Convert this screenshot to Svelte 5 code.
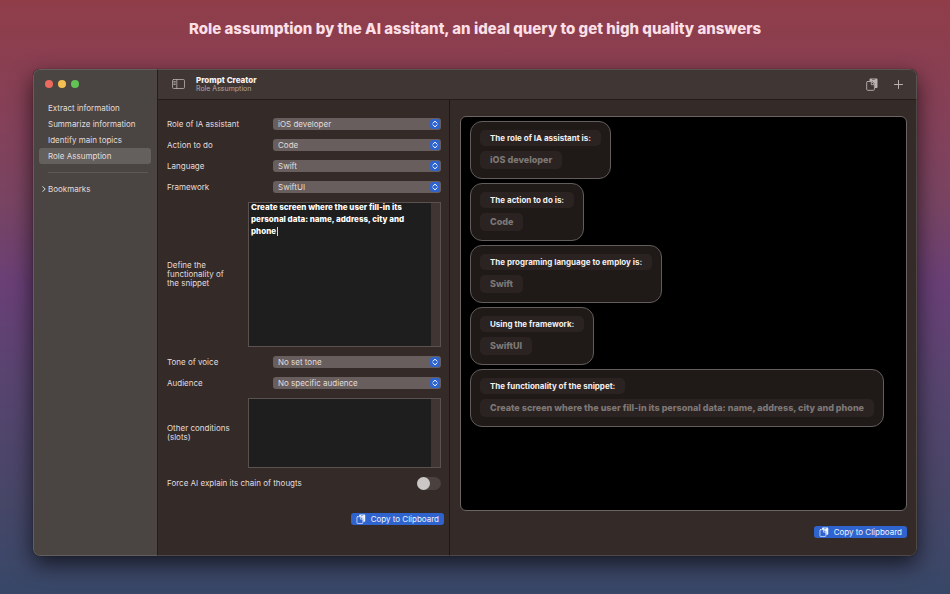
<script>
  const sections = [
    'Extract information',
    'Summarize information',
    'Identify main topics',
    'Role Assumption'
  ];

  let selected = $state('Role Assumption');
  let bookmarksOpen = $state(false);

  const roles = ['iOS developer', 'Web developer', 'Data scientist'];
  const actions = ['Code', 'Explain', 'Refactor'];
  const languages = ['Swift', 'Kotlin', 'JavaScript'];
  const frameworks = ['SwiftUI', 'UIKit', 'AppKit'];
  const tones = ['No set tone', 'Formal', 'Friendly'];
  const audiences = ['No specific audience', 'Beginners', 'Experts'];

  let form = $state({
    role: roles[0],
    action: actions[0],
    language: languages[0],
    framework: frameworks[0],
    tone: tones[0],
    audience: audiences[0],
    snippet: 'Create screen where the user fill-in its personal data: name, address, city and phone',
    conditions: '',
    chain: false
  });

  let cards = $derived([
    { title: 'The role of IA assistant is:', value: form.role },
    { title: 'The action to do is:', value: form.action },
    { title: 'The programing language to employ is:', value: form.language },
    { title: 'Using the framework:', value: form.framework },
    { title: 'The functionality of the snippet:', value: form.snippet }
  ]);

  function copyPrompt() {
    const text = cards.map((c) => `${c.title} ${c.value}`).join('\n');
    navigator.clipboard?.writeText(text);
  }
</script>

{#snippet clipboardIcon()}
  <svg class="clip" viewBox="0 0 12 13" aria-hidden="true">
    <path
      fill="currentColor"
      fill-rule="evenodd"
      d="M4.500.5h6c.6 0 1 .4 1 1v7.600c0 .6-.4 1-1 1H9V6.300L6.200 3.200H3.500V1.500c0-.6.4-1 1-1zM6 1.400v.7h3v-.7z"
    />
    <path
      fill="none"
      stroke="currentColor"
      stroke-width="0.9"
      d="M1.500 3.500h4.200l2.700 2.900v5.100c0 .5-.3.800-.8.800H1.500c-.5 0-.8-.3-.8-.8V4.300c0-.5.3-.8.8-.8zM5.300 3.700v3h3"
    />
  </svg>
{/snippet}

{#snippet picker(id, label, options)}
  <div class="row">
    <label for={id}>{label}</label>
    <div class="popup">
      <select {id} bind:value={form[id]}>
        {#each options as option}
          <option>{option}</option>
        {/each}
      </select>
      <svg class="stepper" viewBox="0 0 10 10" aria-hidden="true">
        <path d="M3 4.100 5 2.100l2 2M3 5.900l2 2 2-2" />
      </svg>
    </div>
  </div>
{/snippet}

<div class="desktop">
  <h1>Role assumption by the AI assitant, an ideal query to get high quality answers</h1>

  <div class="window">
    <aside>
      <div class="lights">
        <button class="red" aria-label="Close"></button>
        <button class="yellow" aria-label="Minimize"></button>
        <button class="green" aria-label="Zoom"></button>
      </div>
      <nav>
        {#each sections as section}
          <button class="item" class:active={selected === section} onclick={() => (selected = section)}>
            {section}
          </button>
        {/each}
      </nav>
      <hr />
      <button class="bookmarks" aria-expanded={bookmarksOpen} onclick={() => (bookmarksOpen = !bookmarksOpen)}>
        <svg viewBox="0 0 4 6" aria-hidden="true"><path d="M.8.600 3.200 3 .8 5.400" /></svg>
        Bookmarks
      </button>
    </aside>

    <main>
      <header>
        <button class="tool" aria-label="Toggle sidebar">
          <svg class="panel" viewBox="0 0 13 10" aria-hidden="true">
            <rect x="0.500" y="0.500" width="12" height="9" rx="1.200" />
            <path d="M4.800.500v9M1.800 2.500h1.500M1.800 4h1.500M1.800 5.500h1.500" />
          </svg>
        </button>
        <div class="titles">
          <h2>Prompt Creator</h2>
          <p>{selected}</p>
        </div>
        <button class="tool" aria-label="Copy" onclick={copyPrompt}>{@render clipboardIcon()}</button>
        <button class="tool" aria-label="Add">
          <svg class="plus" viewBox="0 0 9 9" aria-hidden="true"><path d="M4.500.5v8M.5 4.500h8" /></svg>
        </button>
      </header>

      <div class="panes">
        <section class="form">
          {@render picker('role', 'Role of IA assistant', roles)}
          {@render picker('action', 'Action to do', actions)}
          {@render picker('language', 'Language', languages)}
          {@render picker('framework', 'Framework', frameworks)}

          <div class="row wide">
            <label for="snippet">Define the functionality of the snippet</label>
            <div class="editor tall">
              <textarea id="snippet" bind:value={form.snippet}></textarea>
              <span class="caret"></span>
            </div>
          </div>

          {@render picker('tone', 'Tone of voice', tones)}
          {@render picker('audience', 'Audience', audiences)}

          <div class="row wide">
            <label for="conditions">Other conditions (slots)</label>
            <div class="editor">
              <textarea id="conditions" bind:value={form.conditions}></textarea>
            </div>
          </div>

          <div class="toggle">
            <label for="chain">Force AI explain its chain of thougts</label>
            <input id="chain" type="checkbox" role="switch" bind:checked={form.chain} />
          </div>

          <button class="copy" onclick={copyPrompt}>{@render clipboardIcon()}Copy to Clipboard</button>
        </section>

        <section class="preview">
          <div class="output">
            {#each cards as card}
              <article>
                <h3>{card.title}</h3>
                <p>{card.value}</p>
              </article>
            {/each}
          </div>
          <button class="copy" onclick={copyPrompt}>{@render clipboardIcon()}Copy to Clipboard</button>
        </section>
      </div>
    </main>
  </div>
</div>

<style>
  :global(body) {
    margin: 0;
  }

  .desktop {
    box-sizing: border-box;
    min-height: 100vh;
    padding: 18px 33px 38px;
    display: flex;
    flex-direction: column;
    gap: 29px;
    background: linear-gradient(#903d49 0%, #83415a 22%, #784462 34%, #693f76 48%, #58446f 64%, #474667 84%, #384767 100%);
    color: #e2dddb;
    font-family: Inter, 'Liberation Sans', sans-serif;
    font-size: 8px;
    line-height: 10px;
  }

  h1,
  h2,
  h3,
  p {
    margin: 0;
  }

  h1 {
    color: #fbdfe6;
    font-size: 15px;
    font-weight: 800;
    line-height: 22px;
    text-align: center;
  }

  button,
  select,
  textarea {
    font: inherit;
    color: inherit;
  }

  button {
    padding: 0;
    border: 0;
    background: none;
  }

  svg {
    display: block;
    flex: none;
  }

  svg path,
  svg rect {
    stroke-linecap: round;
    stroke-linejoin: round;
  }

  .bookmarks path,
  .plus path,
  .panel path,
  .panel rect {
    fill: none;
    stroke: currentColor;
  }

  .window {
    flex: 1;
    display: flex;
    border-radius: 7px;
    overflow: hidden;
    background: #342a28;
    box-shadow:
      0 0 1px #00000099,
      0 8px 22px #000000a8;
    position: relative;
  }

  .window::after {
    content: '';
    position: absolute;
    inset: 0;
    border: 1px solid #ffffff24;
    border-radius: 7px;
    pointer-events: none;
  }

  /* sidebar */
  aside {
    box-sizing: border-box;
    flex: 0 0 125px;
    padding: 11px 6px;
    background: #4a4542;
    border-right: 1px solid #231d1b;
  }

  .lights {
    display: flex;
    gap: 5px;
    padding: 0 6px;
  }

  .lights button {
    width: 8px;
    height: 8px;
    border-radius: 50%;
  }

  .red {
    background: #ec6a5e;
  }

  .yellow {
    background: #f4bf50;
  }

  .green {
    background: #61c455;
  }

  nav {
    margin-top: 12px;
    display: flex;
    flex-direction: column;
  }

  .item {
    height: 16px;
    padding: 0 9px;
    border-radius: 3px;
    text-align: left;
  }

  .item.active {
    background: #64605d;
  }

  hr {
    margin: 8px 3px 11px 9px;
    border: 0;
    border-top: 1px solid #5d5855;
  }

  .bookmarks {
    display: flex;
    align-items: center;
    gap: 2px;
    padding: 0 3px;
  }

  .bookmarks svg {
    width: 4px;
    height: 6px;
  }

  /* toolbar */
  main {
    flex: 1;
    min-width: 0;
    display: flex;
    flex-direction: column;
  }

  header {
    box-sizing: border-box;
    height: 31px;
    padding: 0 14px;
    display: flex;
    align-items: center;
    gap: 11px;
    background: #403735;
    border-bottom: 1px solid #241c1b;
  }

  .tool {
    color: #b9b2b0;
  }

  .panel {
    width: 13px;
    height: 10px;
    stroke-width: 0.8;
  }

  .plus {
    width: 9px;
    height: 9px;
  }

  .clip {
    width: 12px;
    height: 13px;
  }

  header .clip {
    margin-right: 5px;
  }

  .titles {
    flex: 1;
  }

  h2 {
    color: #f5f1f0;
    font-size: 8px;
    font-weight: 800;
    line-height: 10px;
  }

  .titles p {
    color: #b0a8a6;
    font-size: 7px;
    line-height: 8px;
  }

  .panes {
    flex: 1;
    display: grid;
    grid-template-columns: 292fr 467fr;
  }

  /* form */
  .form {
    padding: 18px 8px 0 9px;
    display: flex;
    flex-direction: column;
    gap: 9px;
    border-right: 1px solid #1f1716;
  }

  .row {
    display: grid;
    grid-template-columns: minmax(0, 106fr) minmax(0, 168fr);
    align-items: center;
  }

  .row.wide {
    grid-template-columns: minmax(0, 81fr) minmax(0, 193fr);
  }

  label {
    line-height: 9px;
  }

  .row.wide label {
    padding-right: 12px;
  }

  .popup {
    position: relative;
    height: 12px;
  }

  select {
    display: block;
    width: 100%;
    height: 12px;
    padding: 0 14px 0 5px;
    border: 0;
    border-radius: 3px;
    background: #685e5d;
    line-height: 12px;
    appearance: none;
  }

  .stepper {
    position: absolute;
    top: 1px;
    right: 1px;
    width: 10px;
    height: 10px;
    border-radius: 3px;
    background: #2f64cf;
  }

  .stepper path {
    fill: none;
    stroke: #fff;
  }

  .editor {
    position: relative;
    box-sizing: border-box;
    height: 70px;
    border: 1px solid #5b5250;
    background: #1e1e1e;
    overflow: hidden;
    display: flex;
  }

  .editor.tall {
    height: 145px;
  }

  textarea {
    box-sizing: border-box;
    width: 100%;
    margin-top: -2px;
    padding: 0 2px;
    border: 0;
    border-right: 9px solid #403533;
    background: none;
    color: #fff;
    font-weight: 800;
    line-height: 12px;
    resize: none;
    outline: none;
    overflow: hidden;
  }

  .caret {
    position: absolute;
    top: 24px;
    left: 28px;
    width: 1px;
    height: 9px;
    background: #d8d8d8;
  }

  .toggle {
    display: flex;
    justify-content: space-between;
    align-items: center;
  }

  .toggle input {
    appearance: none;
    margin: 0;
    width: 24px;
    height: 13px;
    border-radius: 7px;
    background: #4b4240;
    display: flex;
  }

  .toggle input::before {
    content: '';
    width: 13px;
    height: 13px;
    border-radius: 50%;
    background: #cbc7c6;
  }

  .toggle input:checked {
    justify-content: flex-end;
    background: #2f64cf;
  }

  .copy {
    align-self: flex-end;
    height: 12px;
    padding: 0 5px;
    display: flex;
    align-items: center;
    gap: 5px;
    border-radius: 3px;
    background: #2f64cf;
    color: #f0f3fb;
    white-space: nowrap;
  }

  .copy .clip {
    width: 10px;
    height: 10px;
  }

  .form .copy {
    margin-top: 14px;
    margin-right: -3px;
  }

  /* preview */
  .preview {
    padding: 16px 10px 18px;
    display: flex;
    flex-direction: column;
    gap: 15px;
  }

  .output {
    flex: 1;
    padding: 4px 9px;
    display: flex;
    flex-direction: column;
    align-items: flex-start;
    gap: 4px;
    border: 1px solid #6b6462;
    border-radius: 6px;
    background: #000;
  }

  article {
    padding: 8px 9px 9px;
    display: flex;
    flex-direction: column;
    align-items: flex-start;
    gap: 5px;
    border: 1px solid #625d5b;
    border-radius: 12px;
    background: #1f1a18;
  }

  h3,
  article p {
    padding: 0 10px;
    border-radius: 5px;
    background: #2a2322;
    font-weight: 700;
  }

  h3 {
    color: #f3efee;
    font-size: 8px;
    line-height: 16px;
  }

  article p {
    color: #7d7775;
    font-size: 9px;
    font-weight: 800;
    line-height: 18px;
  }
</style>
